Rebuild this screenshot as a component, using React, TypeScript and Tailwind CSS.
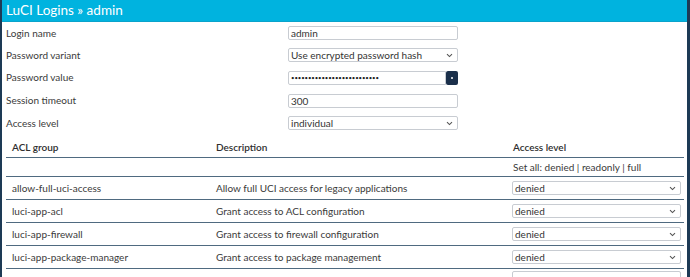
import React from "react";

const Chevron = () => (
  <svg width="7" height="5" viewBox="0 0 7 5" className="shrink-0">
    <path d="M1 1.2 L3.5 3.6 L6 1.2" fill="none" stroke="#555" strokeWidth="1.1" />
  </svg>
);

function Select({ value, className }: { value: string; className?: string }) {
  return (
    <div
      className={
        "flex items-center justify-between h-[14px] border border-[#c8ccd2] rounded-[2px] bg-white pl-[2px] pr-[4px] text-[10px] text-[#333] leading-none " +
        (className || "")
      }
    >
      <span>{value}</span>
      <Chevron />
    </div>
  );
}

function Input({ value }: { value: string }) {
  return (
    <div className="flex items-center h-[14px] w-[170px] border border-[#c8ccd2] rounded-[2px] bg-white pl-[2px] text-[10px] text-[#333] leading-none">
      {value}
    </div>
  );
}

const rows = [
  ["allow-full-uci-access", "Allow full UCI access for legacy applications"],
  ["luci-app-acl", "Grant access to ACL configuration"],
  ["luci-app-firewall", "Grant access to firewall configuration"],
  ["luci-app-package-manager", "Grant access to package management"],
];

export default function App() {
  return (
    <div
      className="w-[690px] h-[277px] overflow-hidden bg-[#1d3a55] text-[#3a3a3a]"
      style={{ fontFamily: 'Lato, "Noto Sans", sans-serif' }}
    >
      <div className="ml-[2px] mr-[3px] h-full bg-white flex flex-col">
        <div className="h-[22px] shrink-0 bg-[#00b3df] flex items-center pl-[4px] text-white text-[13.5px] leading-none border-b border-[#0aa3cb]">
          LuCI Logins » admin
        </div>
        <div className="flex flex-col">
          <div className="flex items-center h-[22px]">
            <span className="w-[286px] pl-[4px] text-[10px]">Login name</span>
            <Input value="admin" />
          </div>
          <div className="flex items-center h-[22px]">
            <span className="w-[286px] pl-[4px] text-[10px]">Password variant</span>
            <Select value="Use encrypted password hash" className="w-[170px]" />
          </div>
          <div className="flex items-center h-[23px]">
            <span className="w-[286px] pl-[4px] text-[10px]">Password value</span>
            <div className="flex items-center w-[170px] gap-0">
              <div className="flex items-center h-[14px] flex-1 border border-[#c8ccd2] rounded-l-[2px] bg-white pl-[2px] text-[6px] text-[#222] tracking-[-0.1px] leading-none overflow-hidden">
                ••••••••••••••••••••••••••
              </div>
              <div className="h-[14px] w-[12px] bg-[#1a2f4a] rounded-[2px] flex items-center justify-center">
                <div className="w-[2px] h-[2px] bg-white rounded-full" />
              </div>
            </div>
          </div>
          <div className="flex items-center h-[23px]">
            <span className="w-[286px] pl-[4px] text-[10px]">Session timeout</span>
            <Input value="300" />
          </div>
          <div className="flex items-center h-[22px]">
            <span className="w-[286px] pl-[4px] text-[10px]">Access level</span>
            <Select value="individual" className="w-[170px]" />
          </div>
        </div>
        <div className="mt-[4px] ml-[4px] mr-[3px] flex flex-col text-[10px]">
          <div className="flex items-center h-[20px] border-b-[1.5px] border-[#4f6a80] text-[#2e2e2e] font-semibold">
            <span className="w-[204px] pl-[6px]">ACL group</span>
            <span className="w-[297px] pl-[6px]">Description</span>
            <span className="pl-[6px]">Access level</span>
          </div>
          <div className="flex items-center h-[19px] border-b-[1.5px] border-[#4f6a80]">
            <span className="w-[204px]" />
            <span className="w-[297px]" />
            <span className="pl-[6px]">Set all: denied | readonly | full</span>
          </div>
          {rows.map(([g, d]) => (
            <div key={g} className="flex items-center h-[23px] border-b-[1.5px] border-[#4f6a80] shrink-0">
              <span className="w-[204px] pl-[6px]">{g}</span>
              <span className="w-[297px] pl-[6px]">{d}</span>
              <div className="flex-1 pl-[5px] pr-[3px]">
                <Select value="denied" className="w-full" />
              </div>
            </div>
          ))}
          <div className="flex items-start h-[23px] pt-[2px] shrink-0">
            <span className="w-[204px]" />
            <span className="w-[297px]" />
            <div className="flex-1 pl-[5px] pr-[3px]">
              <div className="h-[14px] w-full border border-[#c8ccd2] rounded-[2px] bg-white" />
            </div>
          </div>
        </div>
      </div>
    </div>
  );
}
